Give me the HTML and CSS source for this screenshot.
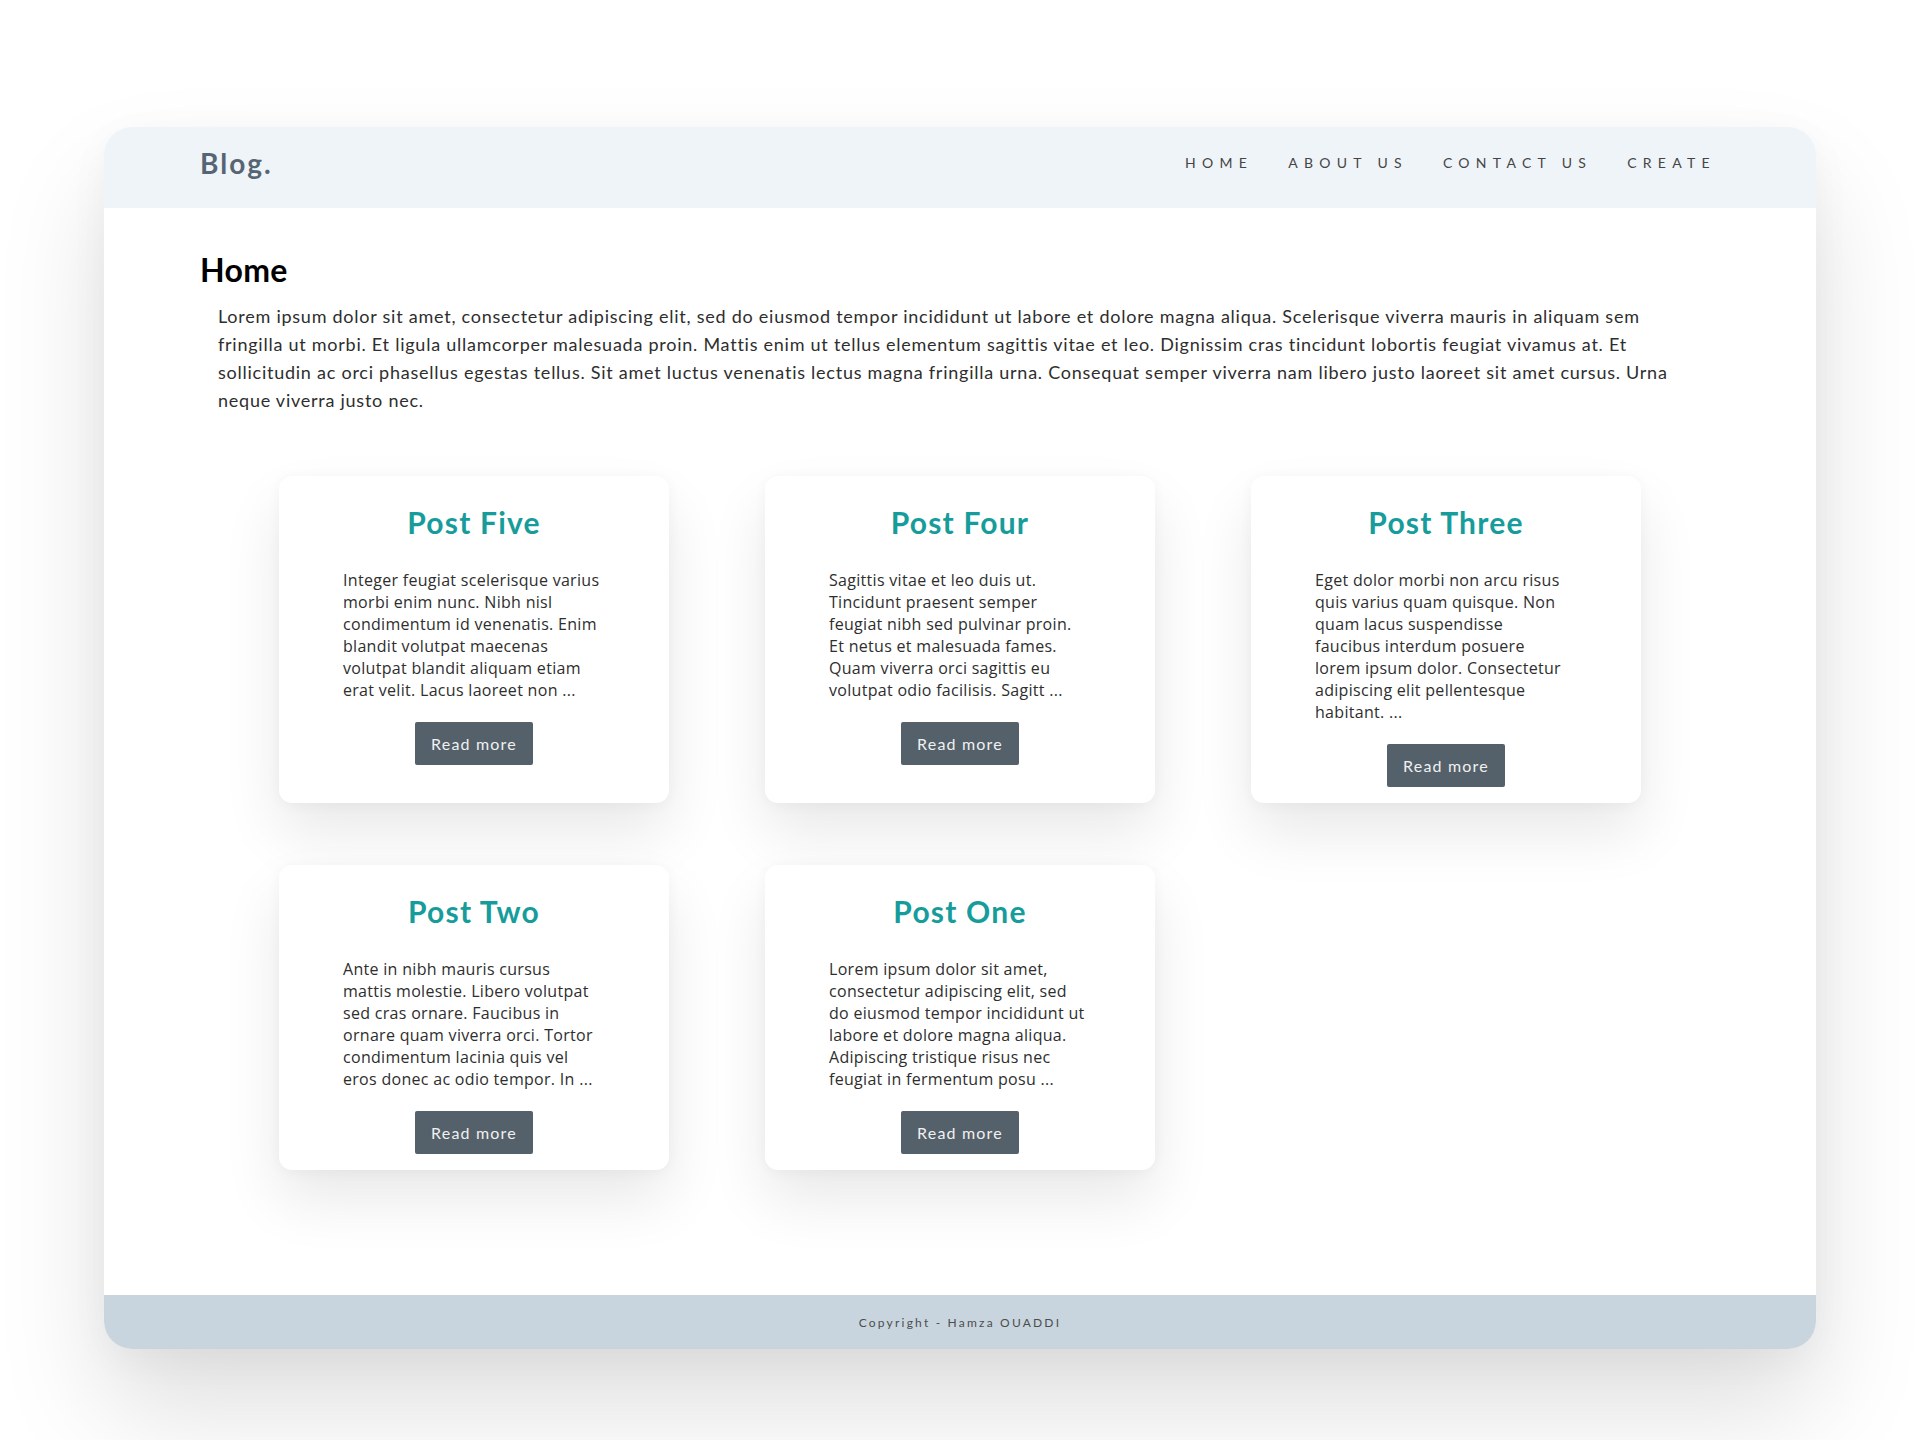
FILE: index.html
```html
<!DOCTYPE html>
<html lang="en">
<head>
<meta charset="utf-8">
<title>Blog</title>
<link rel="stylesheet" href="styles.css">
</head>
<body>
<div class="app">
  <header class="navbar">
    <div class="brand">Blog.</div>
    <nav class="links">
      <a href="#">Home</a>
      <a href="#">About us</a>
      <a href="#">Contact us</a>
      <a href="#">Create</a>
    </nav>
  </header>
  <main class="content">
    <h1 class="page-title">Home</h1>
    <p class="intro">Lorem ipsum dolor sit amet, consectetur adipiscing elit, sed do eiusmod tempor incididunt ut labore et dolore magna aliqua. Scelerisque viverra mauris in aliquam sem fringilla ut morbi. Et ligula ullamcorper malesuada proin. Mattis enim ut tellus elementum sagittis vitae et leo. Dignissim cras tincidunt lobortis feugiat vivamus at. Et sollicitudin ac orci phasellus egestas tellus. Sit amet luctus venenatis lectus magna fringilla urna. Consequat semper viverra nam libero justo laoreet sit amet cursus. Urna neque viverra justo nec.</p>
    <div class="posts">
      <article class="card">
        <h2 class="card-title">Post Five</h2>
        <p class="card-text">Integer feugiat scelerisque varius morbi enim nunc. Nibh nisl condimentum id venenatis. Enim blandit volutpat maecenas volutpat blandit aliquam etiam erat velit. Lacus laoreet non ...</p>
        <a class="btn" href="#">Read more</a>
      </article>
      <article class="card">
        <h2 class="card-title">Post Four</h2>
        <p class="card-text">Sagittis vitae et leo duis ut. Tincidunt praesent semper feugiat nibh sed pulvinar proin. Et netus et malesuada fames. Quam viverra orci sagittis eu volutpat odio facilisis. Sagitt ...</p>
        <a class="btn" href="#">Read more</a>
      </article>
      <article class="card">
        <h2 class="card-title">Post Three</h2>
        <p class="card-text">Eget dolor morbi non arcu risus quis varius quam quisque. Non quam lacus suspendisse faucibus interdum posuere lorem ipsum dolor. Consectetur adipiscing elit pellentesque habitant. ...</p>
        <a class="btn" href="#">Read more</a>
      </article>
      <article class="card">
        <h2 class="card-title">Post Two</h2>
        <p class="card-text">Ante in nibh mauris cursus mattis molestie. Libero volutpat sed cras ornare. Faucibus in ornare quam viverra orci. Tortor condimentum lacinia quis vel eros donec ac odio tempor. In ...</p>
        <a class="btn" href="#">Read more</a>
      </article>
      <article class="card">
        <h2 class="card-title">Post One</h2>
        <p class="card-text">Lorem ipsum dolor sit amet, consectetur adipiscing elit, sed do eiusmod tempor incididunt ut labore et dolore magna aliqua. Adipiscing tristique risus nec feugiat in fermentum posu ...</p>
        <a class="btn" href="#">Read more</a>
      </article>
    </div>
  </main>
  <footer class="footer">Copyright - Hamza OUADDI</footer>
</div>
</body>
</html>
```

FILE: styles.css
```css
* { box-sizing: border-box; }

html, body {
  margin: 0;
  padding: 0;
  background: #ffffff;
}

body {
  font-family: "Lato", "Open Sans", sans-serif;
  color: #333333;
  padding: 127px 0 93px;
  min-height: 1440px;
}

.app {
  width: 1712px;
  margin: 0 auto;
  background: #ffffff;
  border-radius: 28px;
  box-shadow: 0 60px 110px rgba(0, 0, 0, 0.13), 0 10px 40px rgba(0, 0, 0, 0.04);
}

.navbar {
  height: 81px;
  padding: 0 100px 10px 96px;
  background: #eff4f8;
  border-radius: 28px 28px 0 0;
  display: flex;
  align-items: center;
  justify-content: space-between;
}

.brand {
  font-size: 28px;
  font-weight: 700;
  color: #566573;
  letter-spacing: 2px;
}

.links {
  display: flex;
  gap: 35px;
}

.links a {
  font-size: 14px;
  text-transform: uppercase;
  letter-spacing: 6.3px;
  color: #454545;
  text-decoration: none;
}

.content {
  padding: 42px 96px 125px;
}

.page-title {
  margin: 0;
  font-size: 32px;
  font-weight: 700;
  color: #000000;
  letter-spacing: 0.3px;
}

.intro {
  margin: 13px 18px 0;
  font-size: 18px;
  line-height: 28px;
  letter-spacing: 0.75px;
  color: #2e2e2e;
}

.posts {
  margin-top: 62px;
  display: grid;
  grid-template-columns: repeat(3, 390px);
  column-gap: 96px;
  row-gap: 62px;
  justify-content: center;
}

.card {
  background: #ffffff;
  border-radius: 13px;
  box-shadow: 0 30px 60px rgba(0, 0, 0, 0.09), 0 2px 14px rgba(0, 0, 0, 0.04);
  padding: 28px 69px 16px 64px;
  display: flex;
  flex-direction: column;
  align-items: center;
}

.card-title {
  margin: 0 -5px 0 0;
  align-self: stretch;
  font-size: 30px;
  font-weight: 700;
  letter-spacing: 1.2px;
  color: #179c9c;
  text-align: center;
}

.card-text {
  margin: 29px 0 0;
  align-self: stretch;
  font-family: "Open Sans", "Lato", sans-serif;
  font-size: 16px;
  line-height: 22px;
  letter-spacing: 0.3px;
  color: #2e2e2e;
}

.btn {
  margin-top: 21px;
  margin-right: -5px;
  display: inline-block;
  height: 43px;
  line-height: 43px;
  padding: 0 16px;
  background: #54616b;
  color: #f0f0f0;
  font-size: 16px;
  letter-spacing: 1.2px;
  text-decoration: none;
  border-radius: 2px;
}

.footer {
  height: 54px;
  background: #c8d5df;
  border-radius: 0 0 28px 28px;
  display: flex;
  align-items: center;
  justify-content: center;
  font-size: 12px;
  letter-spacing: 2.2px;
  color: #4d4d4d;
}
```
